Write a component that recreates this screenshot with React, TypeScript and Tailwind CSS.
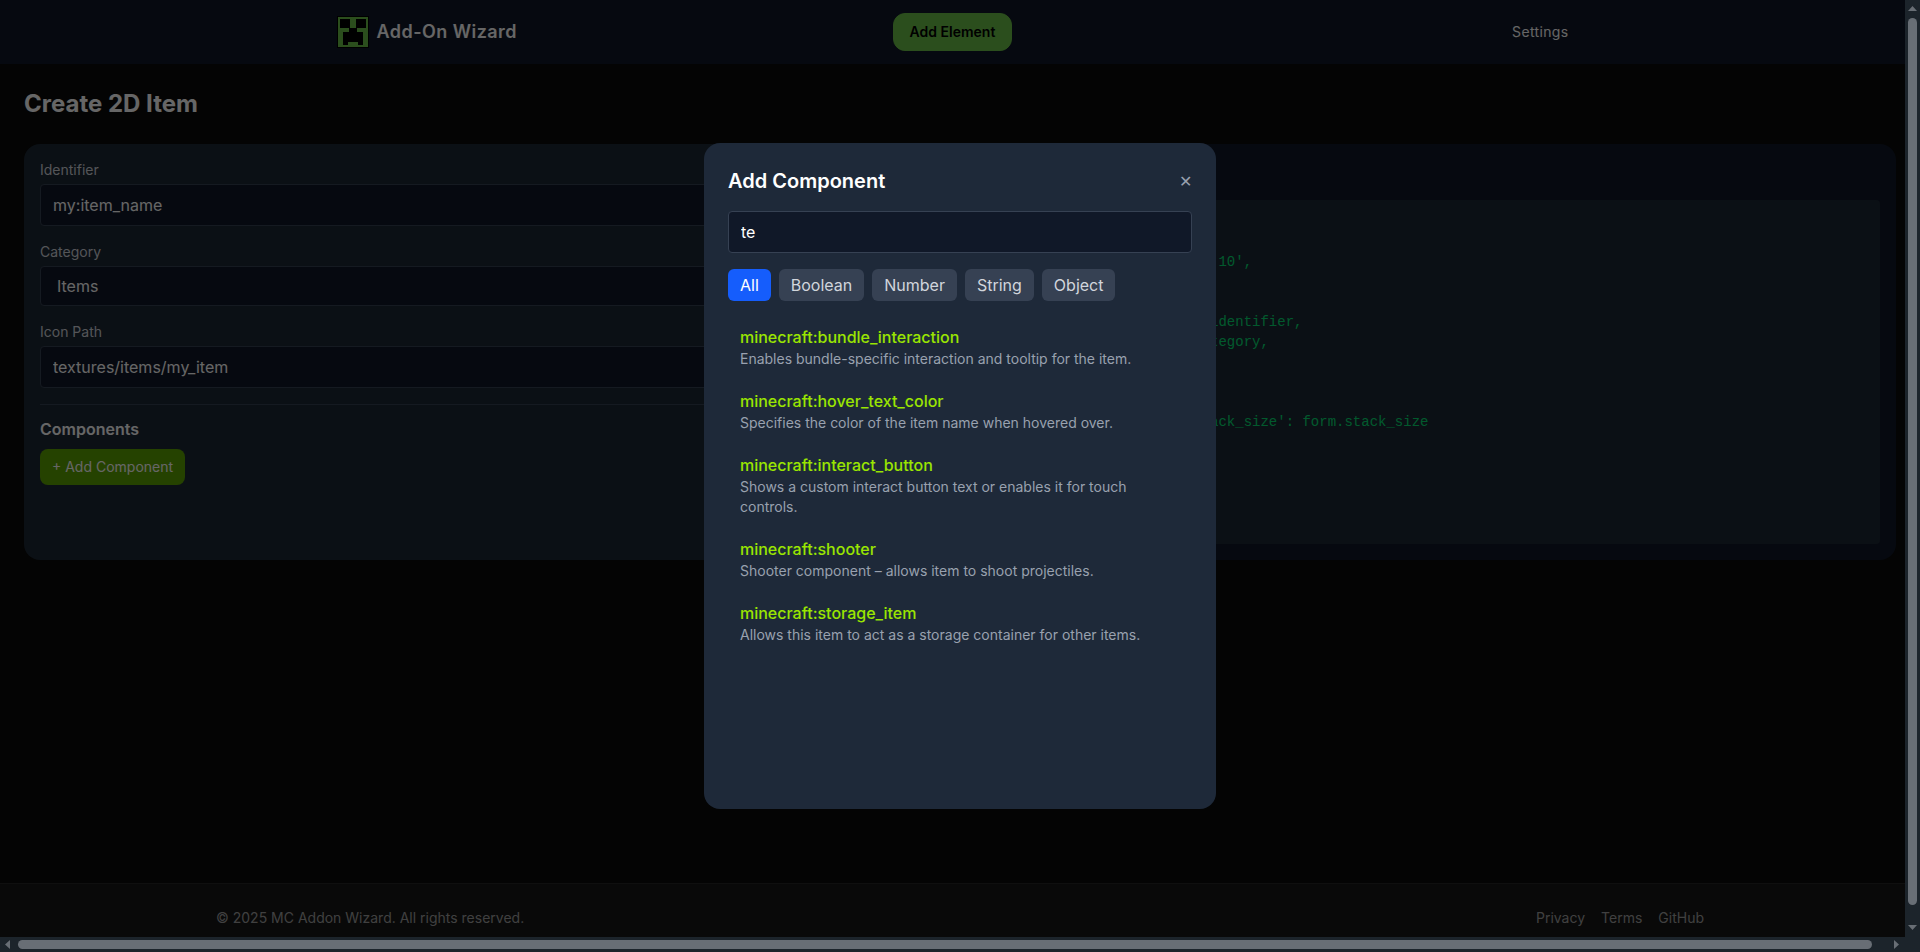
import { useState } from "react";

const filters = ["All", "Boolean", "Number", "String", "Object"];

const components = [
  { name: "minecraft:bundle_interaction", description: "Enables bundle-specific interaction and tooltip for the item." },
  { name: "minecraft:hover_text_color", description: "Specifies the color of the item name when hovered over." },
  { name: "minecraft:interact_button", description: "Shows a custom interact button text or enables it for touch controls." },
  { name: "minecraft:shooter", description: "Shooter component – allows item to shoot projectiles." },
  { name: "minecraft:storage_item", description: "Allows this item to act as a storage container for other items." },
];

const code = `
{
    format_version: '1.20.10',
    'minecraft:item': {
      description: {
        identifier: form.identifier,
        category: form.category,
      },
      components: {
        ...components,
        'minecraft:max_stack_size': form.stack_size
      }
    }
}
`;

function Logo() {
  return (
    <svg viewBox="0 0 32 32" className="size-8" shapeRendering="crispEdges" aria-hidden="true">
      <path fill="#000" d="M0 0h32v32H0z" />
      <path fill="#6cc349" d="M1 1h30v30H1z" />
      <path fill="#000" d="M3 3h10v9H3zM19 3h10v9H19zM12 12h8v4h6v13h-5v-3H11v3H6V16h6z" />
    </svg>
  );
}

function Header() {
  return (
    <header className="bg-gray-900 pr-[15px]">
      <div className="mx-auto grid h-16 max-w-7xl grid-cols-[1fr_auto_1fr] items-center px-6">
        <a href="#" className="flex items-center gap-2 text-lg font-semibold tracking-wide">
          <Logo />
          Add-On Wizard
        </a>
        <button className="rounded-xl border border-[#6cc349] bg-[#6cc349] px-4 py-2 text-sm font-semibold text-black">
          Add Element
        </button>
        <a href="#" className="justify-self-end text-sm tracking-wide">
          Settings
        </a>
      </div>
    </header>
  );
}

const field = "w-full rounded border border-gray-700 bg-gray-900 px-3";

function ItemForm() {
  return (
    <form className="rounded-2xl bg-[#1d2936] p-4">
      <div className="mb-4">
        <label htmlFor="identifier" className="mb-1 block text-sm text-gray-300">Identifier</label>
        <input id="identifier" defaultValue="my:item_name" className={`${field} block py-2`} />
      </div>
      <div className="mb-4">
        <label htmlFor="category" className="mb-1 block text-sm text-gray-300">Category</label>
        <select id="category" className={`${field} block h-10`}>
          <option>Items</option>
        </select>
      </div>
      <div className="mb-4">
        <label htmlFor="icon" className="mb-1 block text-sm text-gray-300">Icon Path</label>
        <input id="icon" defaultValue="textures/items/my_item" className={`${field} block py-2`} />
      </div>
      <div className="border-t border-gray-700 pt-3">
        <h2 className="mb-2 font-semibold">Components</h2>
        <button type="button" className="rounded-lg bg-lime-600 px-3 py-2 text-sm">
          + Add Component
        </button>
      </div>
    </form>
  );
}

function Preview() {
  return (
    <section className="rounded-2xl bg-gray-900 p-4">
      <h2 className="mb-3 text-lg font-semibold">Preview</h2>
      <pre className="min-h-[344px] rounded bg-[#1d2936] p-3 font-['Liberation_Mono',monospace] text-sm text-green-400">
        {code}
      </pre>
    </section>
  );
}

function Footer() {
  return (
    <footer className="mt-auto border-t border-neutral-800 bg-neutral-900 text-sm text-neutral-400">
      <div className="mx-auto flex max-w-screen-2xl justify-between px-6 py-6">
        <p>© 2025 MC Addon Wizard. All rights reserved.</p>
        <nav className="flex gap-4">
          <a href="#">Privacy</a>
          <a href="#">Terms</a>
          <a href="#">GitHub</a>
        </nav>
      </div>
    </footer>
  );
}

function AddComponentDialog() {
  const [query, setQuery] = useState("te");
  const [active, setActive] = useState("All");
  return (
    <div className="fixed inset-0 z-10 flex items-center justify-center bg-black/60">
      <div role="dialog" aria-label="Add Component" className="flex h-[70vh] w-full max-w-lg flex-col rounded-2xl bg-gray-800 p-6">
        <div className="mb-4 flex items-center justify-between">
          <h2 className="text-xl font-semibold">Add Component</h2>
          <button aria-label="Close" className="text-gray-400">✕</button>
        </div>
        <input
          aria-label="Search components"
          value={query}
          onChange={(e) => setQuery(e.target.value)}
          className="mb-4 w-full rounded border border-gray-700 bg-gray-900 px-3 py-2"
        />
        <div className="mb-4 flex gap-2">
          {filters.map((f) => (
            <button
              key={f}
              onClick={() => setActive(f)}
              className={`rounded-md px-3 py-1 ${f === active ? "bg-blue-600 text-white" : "bg-gray-700 text-gray-300"}`}
            >
              {f}
            </button>
          ))}
        </div>
        <ul className="flex-1 space-y-1 overflow-y-auto">
          {components.map((c) => (
            <li key={c.name} className="px-3 py-2">
              <div className="font-medium text-lime-400">{c.name}</div>
              <div className="text-sm text-gray-400">{c.description}</div>
            </li>
          ))}
        </ul>
      </div>
    </div>
  );
}

function Arrow({ className }: { className: string }) {
  return (
    <svg viewBox="0 0 9 5" className={`h-[5px] w-[9px] shrink-0 ${className}`} aria-hidden="true">
      <path fill="#686e75" d="M4.5 0 9 5H0z" />
    </svg>
  );
}

function Scrollbars() {
  return (
    <>
      <div className="fixed inset-y-0 right-0 z-20 flex w-[15px] flex-col items-center bg-[#1c242b] pt-[6px] pb-[22px]">
        <Arrow className="mb-[7px]" />
        <div className="w-[9px] flex-1 rounded-full bg-[#686e75]" />
        <Arrow className="mt-5 rotate-180" />
      </div>
      <div className="fixed inset-x-0 bottom-0 z-20 flex h-[15px] items-center bg-[#1c242b] pr-[19px] pl-[3px]">
        <Arrow className="mr-[6px] -rotate-90" />
        <div className="h-[9px] flex-1 rounded-full bg-[#686e75]" />
        <Arrow className="ml-5 rotate-90" />
      </div>
    </>
  );
}

export default function App() {
  return (
    <div className="flex h-screen flex-col overflow-hidden bg-neutral-950 font-[Inter,sans-serif] text-white">
      <Header />
      <main className="p-6">
        <h1 className="mb-6 text-2xl font-bold">Create 2D Item</h1>
        <div className="grid grid-cols-2 gap-6">
          <ItemForm />
          <Preview />
        </div>
      </main>
      <Footer />
      <AddComponentDialog />
      <Scrollbars />
    </div>
  );
}
